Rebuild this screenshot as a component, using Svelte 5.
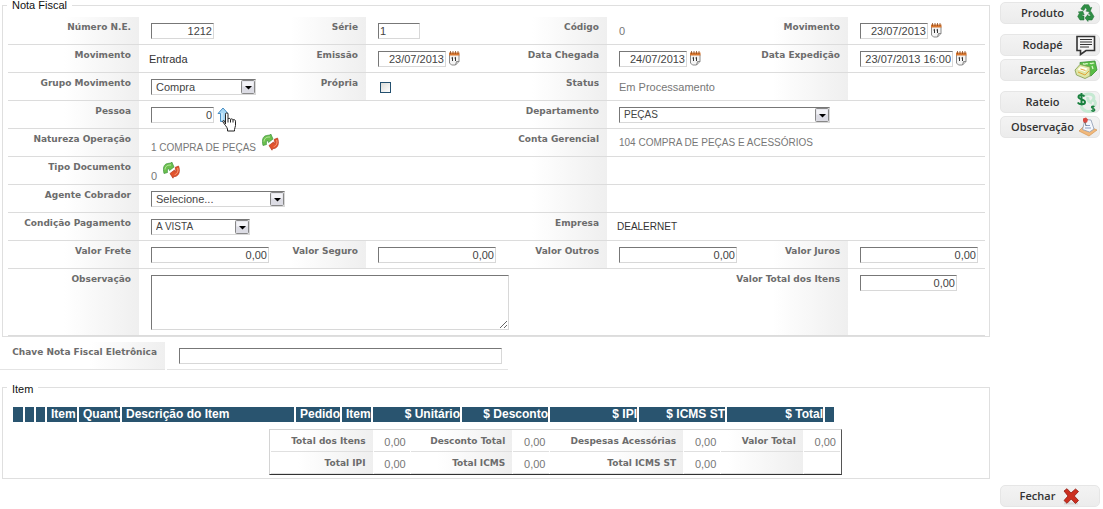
<script>
  let nota = $state({
    numero: '1212', serie: '1', movimento: '23/07/2013', emissao: '23/07/2013',
    chegada: '24/07/2013', expedicao: '23/07/2013 16:00', propria: false, pessoa: '0',
    frete: '0,00', seguro: '0,00', outros: '0,00', juros: '0,00', total: '0,00',
    observacao: '', chave: ''
  });

  const columns = [
    { text: '', width: 12 }, { text: '', width: 11 }, { text: '', width: 11 },
    { text: 'Item', width: 32 }, { text: 'Quant.', width: 43 },
    { text: 'Descrição do Item', width: 174 }, { text: 'Pedido', width: 46 },
    { text: 'Item', width: 31 }, { text: '$ Unitário', width: 89, num: true },
    { text: '$ Desconto', width: 88, num: true }, { text: '$ IPI', width: 89, num: true },
    { text: '$ ICMS ST', width: 88, num: true }, { text: '$ Total', width: 98, num: true },
    { text: '', width: 9 }
  ];

  const totals = [
    [['Total dos Itens', '0,00'], ['Desconto Total', '0,00'], ['Despesas Acessórias', '0,00'], ['Valor Total', '0,00']],
    [['Total IPI', '0,00'], ['Total ICMS', '0,00'], ['Total ICMS ST', '0,00'], ['', '']]
  ];
</script>

{#snippet calendar(name)}
  <button class="icon" type="button" aria-label={name}>
    <svg width="11" height="15" viewBox="0 0 11 15">
      <path d="M.5 3.5h9.500v7l-3.500 3.500H2.500L.5 12z" fill="#f4f4f4" stroke="#8a8a8a" />
      <path d="M10 10.500H7.500L6.500 14" fill="#c9c9c9" stroke="#777" stroke-width=".8" />
      <path d="M0 1.500h10.500v3H0z" fill="#d9772f" />
      <path d="M1.500 0v3M4 0v3M6.500 0v3M9 0v3" stroke="#8c4a20" stroke-width=".8" />
      <path d="M2.500 7l1-.7V10M5.500 7l1-.7V10" fill="none" stroke="#333" />
    </svg>
  </button>
{/snippet}

{#snippet refresh(name)}
  <button class="icon" type="button" aria-label={name}>
    <svg width="17" height="17" viewBox="0 0 17 17">
      <path d="M1 11.500C-.5 6 1 2 4.500 1.500L8 1l.8-1L11 5 6.500 8.500 6 6.500C4.500 6.500 4 8.500 4.500 10.500z" fill="#6cc04d" stroke="#3f9440" stroke-width=".7" />
      <path d="M2 7.500c.5-4 3-4.500 6-4.500" fill="none" stroke="#b9e8a2" />
      <path d="M15.500 4c2 5 .5 10-3.500 10.500l-1.500.2-.5 1.500L7 11.500 11.500 8l.5 2C13 9.500 13 7.500 12 5.500z" fill="#e2532c" stroke="#b3361c" stroke-width=".7" />
      <path d="M14.700 6c.8 3 0 5.500-3 6.700" fill="none" stroke="#f9a27e" />
    </svg>
  </button>
{/snippet}

<div class="page">
  <main>
    <fieldset class="nota">
      <legend>Nota Fiscal</legend>

      <div class="row">
        <label class="lb" for="numero">Número N.E.</label>
        <div class="vl"><input id="numero" class="w63 num" bind:value={nota.numero} /></div>
        <label class="lb" for="serie">Série</label>
        <div class="vl"><input id="serie" class="w42" bind:value={nota.serie} /></div>
        <span class="lb">Código</span>
        <div class="vl"><output>0</output></div>
        <label class="lb" for="movimento">Movimento</label>
        <div class="vl"><input id="movimento" class="w68 num" bind:value={nota.movimento} />{@render calendar('Escolher data do movimento')}</div>
      </div>

      <div class="row">
        <span class="lb">Movimento</span>
        <div class="vl fixed"><output>Entrada</output></div>
        <label class="lb" for="emissao">Emissão</label>
        <div class="vl"><input id="emissao" class="w68 num" bind:value={nota.emissao} />{@render calendar('Escolher data de emissão')}</div>
        <label class="lb" for="chegada">Data Chegada</label>
        <div class="vl"><input id="chegada" class="w68 num" bind:value={nota.chegada} />{@render calendar('Escolher data de chegada')}</div>
        <label class="lb" for="expedicao">Data Expedição</label>
        <div class="vl"><input id="expedicao" class="w93 num" bind:value={nota.expedicao} />{@render calendar('Escolher data de expedição')}</div>
      </div>

      <div class="row">
        <label class="lb" for="grupo">Grupo Movimento</label>
        <div class="vl"><select id="grupo" class="w105"><option>Compra</option></select></div>
        <label class="lb" for="propria">Própria</label>
        <div class="vl"><input id="propria" type="checkbox" bind:checked={nota.propria} /></div>
        <span class="lb">Status</span>
        <div class="vl"><output>Em Processamento</output></div>
        <span class="lb"></span>
        <div class="vl"></div>
      </div>

      <div class="row">
        <label class="lb" for="pessoa">Pessoa</label>
        <div class="vl wide">
          <input id="pessoa" class="w63 num" bind:value={nota.pessoa} />
          <button class="icon lookup" type="button" aria-label="Buscar pessoa">
            <svg width="12" height="16" viewBox="0 0 12 16">
              <path d="M6 1l5 5.500H8.500V14.500h-5V6.500H1z" fill="#a9d8f5" stroke="#4a8fc4" />
              <path d="M5 6v7" stroke="#e6f6ff" />
            </svg>
            <svg class="hand" width="15" height="20" viewBox="0 0 15 20">
              <path d="M3.500 12V2.200C3.500.4 6 .4 6 2.200V7c.4-1 2.300-.8 2.500.4.5-.9 2.300-.6 2.500.5.8-.7 2.500-.2 2.500 1.300v4.300c0 1.500-1 2.500-1 4v1.500h-7V17C5 15 2.500 12.500 1 10c-.7-1.500.8-2 1.600-1z" fill="#fff" stroke="#222" />
              <path d="M6 7v3.500M8.500 7.500v3M11 8v2.500" stroke="#222" />
            </svg>
          </button>
        </div>
        <label class="lb" for="departamento">Departamento</label>
        <div class="vl wide"><select id="departamento" class="w211 caps"><option>PEÇAS</option></select></div>
      </div>

      <div class="row">
        <span class="lb">Natureza Operação</span>
        <div class="vl wide low"><output class="caps">1 COMPRA DE PEÇAS</output>{@render refresh('Atualizar natureza')}</div>
        <span class="lb">Conta Gerencial</span>
        <div class="vl wide"><output class="caps">104 COMPRA DE PEÇAS E ACESSÓRIOS</output></div>
      </div>

      <div class="row">
        <span class="lb">Tipo Documento</span>
        <div class="vl wide low"><output>0</output>{@render refresh('Atualizar tipo de documento')}</div>
        <span class="lb"></span>
        <div class="vl wide"></div>
      </div>

      <div class="row">
        <label class="lb" for="agente">Agente Cobrador</label>
        <div class="vl wide"><select id="agente" class="w134"><option>Selecione...</option></select></div>
        <span class="lb"></span>
        <div class="vl wide"></div>
      </div>

      <div class="row">
        <label class="lb" for="condicao">Condição Pagamento</label>
        <div class="vl wide"><select id="condicao" class="w99 caps"><option>A VISTA</option></select></div>
        <span class="lb">Empresa</span>
        <div class="vl wide fixed"><output class="caps">DEALERNET</output></div>
      </div>

      <div class="row">
        <label class="lb" for="frete">Valor Frete</label>
        <div class="vl"><input id="frete" class="w118 num" bind:value={nota.frete} /></div>
        <label class="lb" for="seguro">Valor Seguro</label>
        <div class="vl"><input id="seguro" class="w118 num" bind:value={nota.seguro} /></div>
        <label class="lb" for="outros">Valor Outros</label>
        <div class="vl"><input id="outros" class="w118 num" bind:value={nota.outros} /></div>
        <label class="lb" for="juros">Valor Juros</label>
        <div class="vl"><input id="juros" class="w118 num" bind:value={nota.juros} /></div>
      </div>

      <div class="row tall">
        <label class="lb" for="observacao">Observação</label>
        <div class="vl memo"><textarea id="observacao" bind:value={nota.observacao}></textarea></div>
        <label class="lb double" for="total">Valor Total dos Itens</label>
        <div class="vl"><input id="total" class="w97 num" bind:value={nota.total} /></div>
      </div>
    </fieldset>

    <div class="chave">
      <label class="lb" for="chave">Chave Nota Fiscal Eletrônica</label>
      <div class="vl"><input id="chave" bind:value={nota.chave} /></div>
    </div>

    <fieldset class="itens">
      <legend>Item</legend>
      <table class="grid">
        <colgroup>
          {#each columns as c}<col style="width: {c.width}px" />{/each}
        </colgroup>
        <thead>
          <tr>{#each columns as c}<th class:num={c.num}>{c.text}</th>{/each}</tr>
        </thead>
      </table>
      <table class="totals">
        <colgroup>
          <col class="t101" /><col class="t36" /><col class="t101" /><col class="t36" />
          <col class="t131" /><col class="t36" /><col class="t80" /><col class="t36" />
        </colgroup>
        <tbody>
          {#each totals as line}
            <tr>{#each line as [name, value]}<th class="lb">{name}</th><td>{value}</td>{/each}</tr>
          {/each}
        </tbody>
      </table>
    </fieldset>
  </main>

  <aside>
    <div class="group">
      <button class="action" type="button"><span>Produto</span>
        <svg width="24" height="18" viewBox="-3 0 24 18">
          <g fill="#2f8f45" stroke="#1d6b31" stroke-width=".5">
            <path d="M5.500 2.500L7 .7h4.500L13.500 4l1.300-.7L13 8 8.800 7l1.400-.8L8.500 3.500 6.800 6.500 3.800 5z" />
            <path d="M14 7.500l3 5-2 3.500h-4v1.500L8 14l3-3.500V12h3l-2.500-3z" />
            <path d="M7 12v4H3L.7 12.500 2.500 9 1.200 8l4.600-.8L7.200 11l-1.400-.5-.8 1.500z" />
          </g>
        </svg>
      </button>
    </div>
    <div class="group">
      <button class="action" type="button"><span>Rodapé</span>
        <svg width="24" height="21" viewBox="-2 0 24 21">
          <path d="M1 1.500h17.500V15.500H10L4.500 19.500V15.500H1z" fill="#f4f4f4" stroke="#333" stroke-width="1.600" />
          <path d="M4 4.500h12M4 7h12M4 9.500h12M4 12h9" stroke="#333" stroke-width="1.200" />
        </svg>
      </button>
      <button class="action" type="button"><span>Parcelas</span>
        <svg width="24" height="20" viewBox="0 0 24 20">
          <path d="M6 2.500l15-1.500 2 9-6 6-10-3z" fill="#58bd45" stroke="#3b9134" stroke-width=".8" />
          <path d="M9 3.500c2 2 3-1 5 .5M16 3c1 2 3-1 4 .5M18 6l1 3" fill="none" stroke="#d8f5c7" stroke-width="1.300" />
          <path d="M1 10l5-5.500 10 2.500v9L11 18.500 2.500 15z" fill="#dfe6a5" stroke="#7d9b51" stroke-width=".8" />
          <path d="M3.500 9.500l3-3 7 2-2.500 3.500z" fill="#fffef0" />
          <path d="M4 12l7 3 4-4M6.500 9l5 1.500" fill="none" stroke="#e0a33b" />
        </svg>
      </button>
    </div>
    <div class="group">
      <button class="action" type="button"><span>Rateio</span>
        <svg width="24" height="21" viewBox="-2 0 24 21">
          <path d="M8 3c7-3 12 1 9 5 3 1 3 4 1 6M5 14c2 6 8 6 11 5M12 5c-1 3 1 5 4 6" fill="none" stroke="#c5e9d2" stroke-width="3" />
          <path d="M8.500 4.500C7 2.300 2.500 2.300 2.500 5s6.500 2 6.500 5-5.500 3-7.300.5M5.500 1v12.500" fill="none" stroke="#19803e" stroke-width="2" />
          <path d="M18.500 14.800c-1-1-3-.8-3 .5s3.300 1 3.300 2.600-2.600 1.500-3.500.4M17 13.500v6.500" fill="none" stroke="#19803e" stroke-width="1.300" />
        </svg>
      </button>
      <button class="action" type="button"><span>Observação</span>
        <svg width="24" height="20" viewBox="-4 0 24 20">
          <path d="M1 14l6-6 12 5-8 6z" fill="#f1b97c" stroke="#d49552" stroke-width=".7" />
          <path d="M4.500 12.500L7 2.500l6 .5 3 9-4.500 3z" fill="#f4f7fc" stroke="#8d9ab3" stroke-width=".8" />
          <path d="M8 8.500h4M7 11h6" stroke="#8aa0c4" />
          <path d="M5 1.500l3-1 2 2-1 3-3 .5-1-2z" fill="#d94a41" />
          <path d="M7 5l1 4" stroke="#555" stroke-width=".8" />
        </svg>
      </button>
    </div>
    <div class="group last">
      <button class="action close" type="button">Fechar
        <svg width="17" height="17" viewBox="0 0 17 17">
          <path d="M1 15.500h14" stroke="#d5d5d5" stroke-width="2" />
          <path d="M1 3l3-2.300L8 5l4.500-4L15.500 3.500 11.300 8l4.200 4.500L12.500 15.500 8.200 11 4 15.300 1 12.500 5 8z" fill="#cc2f20" stroke="#93190f" stroke-width=".8" />
        </svg>
      </button>
    </div>
  </aside>
</div>

<style>
  :global(body) { background: #fff; }
  .page {
    display: flex;
    gap: 10px;
    min-height: 100vh;
    box-sizing: border-box;
    padding: 0 3px 2px 0;
    font-family: "Liberation Sans", Arial, sans-serif;
    font-size: 11px;
    color: #777;
  }
  main { flex: 1; min-width: 0; }
  fieldset {
    margin: 0 0 0 2px;
    padding: 0 4px 0 5px;
    min-width: 0;
    border: 1px solid #dfdfdf;
  }
  legend { padding: 0 5px; margin-left: -1px; font-size: 11px; line-height: 11px; color: #111; }
  .nota .row:first-of-type { margin-top: 6px; }

  .row {
    display: grid;
    grid-template-columns: 131fr 138fr 89fr 131fr 110fr 131fr 110fr 137fr;
    height: 28px;
    box-sizing: border-box;
    border-bottom: 1px solid #dcdcdc;
  }
  .row.tall { height: 67px; }
  .wide { grid-column: span 3; }
  .memo { grid-column: span 4; }
  .double { grid-column: span 2; }

  .lb {
    box-sizing: border-box;
    padding: 4px 8px 0 0;
    font: bold 9px/12px "DejaVu Sans", Verdana, sans-serif;
    text-align: right;
    white-space: nowrap;
    color: #6c6c6c;
    background: linear-gradient(to right, #fff, #efefef) right / 75px 100% no-repeat;
  }
  .vl {
    display: flex;
    align-items: flex-start;
    gap: 3px;
    min-width: 0;
    padding: 6px 0 0 12px;
    box-sizing: border-box;
  }
  output { line-height: 16px; white-space: nowrap; }
  .fixed { padding-left: 10px; }
  .fixed output { color: #333; }
  .low { gap: 6px; padding-top: 5px; }
  .low output { padding-top: 6px; }

  input, select, textarea {
    box-sizing: border-box;
    margin: 0;
    height: 16px;
    padding: 0 1px;
    border: 1px solid #d8d8d8;
    border-top-color: #777;
    border-left-color: #777;
    border-radius: 0;
    background: #fff;
    font: 11px/14px "Liberation Sans", Arial, sans-serif;
    color: #444;
  }
  .num { text-align: right; }
  .w42 { width: 42px; }
  .w63 { width: 63px; }
  .w68 { width: 68px; }
  .w93 { width: 93px; }
  .w97 { width: 97px; }
  .w99 { width: 99px; }
  .w105 { width: 105px; }
  .w118 { width: 118px; }
  .w134 { width: 134px; }
  .w211 { width: 211px; }
  select {
    appearance: none;
    padding: 0 16px 0 4px;
    background: #fff url("data:image/svg+xml,%3Csvg xmlns='http://www.w3.org/2000/svg' width='14' height='14'%3E%3Crect x='.5' y='.5' width='13' height='13' rx='1' fill='%23dcdce4' stroke='%23888'/%3E%3Cpath d='M1.500 1.500h11v5h-11z' fill='%23f3f3f7'/%3E%3Cpath d='M4 6h7L7.500 9.500z' fill='%23000'/%3E%3C/svg%3E") right center no-repeat;
  }
  .caps { font-size: 10px; }
  textarea { display: block; width: 358px; height: 55px; resize: both; }
  input[type="checkbox"] {
    appearance: none;
    width: 11px;
    height: 11px;
    margin: 3px 0 0 2px;
    padding: 0;
    border: 1px solid #24506f;
    background: linear-gradient(135deg, #dcdcd8, #fff);
  }
  input[type="checkbox"]:checked { background: #24506f; }

  .icon { display: block; margin: 0; padding: 0; border: 0; background: none; cursor: pointer; }
  .icon svg { display: block; }
  .lookup { position: relative; }
  .hand { position: absolute; left: 5px; top: 5px; }

  .chave {
    display: grid;
    grid-template-columns: 165px 341px;
    gap: 2px;
    margin-top: 5px;
  }
  .chave > * { height: 28px; border-bottom: 1px solid #e4e4e4; }
  .chave .vl input { width: 323px; }

  .itens { margin-top: 9px; padding: 12px 4px 3px 10px; }
  .itens legend { margin-left: -6px; padding-top: 5px; }
  table { table-layout: fixed; border-spacing: 0; }
  .grid { width: 821px; }
  .grid th {
    height: 15px;
    padding: 0 0 0 4px;
    border-right: 2px solid #fff;
    background: #29546f;
    color: #fff;
    font: bold 12px/15px "Liberation Sans", Arial, sans-serif;
    text-align: left;
    white-space: nowrap;
  }
  .grid th:last-child { border-right: 0; }
  .grid th.num { padding: 0; text-align: right; }
  .totals {
    width: 573px;
    margin: 7px 0 0 256px;
    border: 1px solid #d4d4d4;
    border-right: 1px solid #555;
    border-bottom: 1px solid #333;
    border-spacing: 1px 0;
  }
  .totals th, .totals td { height: 22px; border-bottom: 1px solid #e0e0e0; box-sizing: border-box; }
  .totals th { padding: 0 7px 0 0; vertical-align: middle; }
  .totals td { padding: 2px 4px 0 0; text-align: right; }
  .t36 { width: 36px; }
  .t80 { width: 81px; }
  .t101 { width: 101px; }
  .t131 { width: 132px; }

  aside { display: flex; flex-direction: column; gap: 10px; width: 100px; padding-top: 2px; }
  .group { display: flex; flex-direction: column; gap: 3px; }
  .group.last { margin-top: auto; }
  .action {
    display: flex;
    align-items: center;
    justify-content: flex-end;
    height: 22px;
    padding: 0 1px 0 10px;
    border: 1px solid #e6e6e6;
    border-radius: 5px;
    background: linear-gradient(#f3f3f3, #ececec);
    font: 600 11px/20px "Open Sans", sans-serif;
    color: #333;
    cursor: pointer;
  }
  .action span { flex: 1; text-align: center; }
  .action svg { flex: none; }
  .close { justify-content: center; gap: 8px; padding: 0; }
</style>
